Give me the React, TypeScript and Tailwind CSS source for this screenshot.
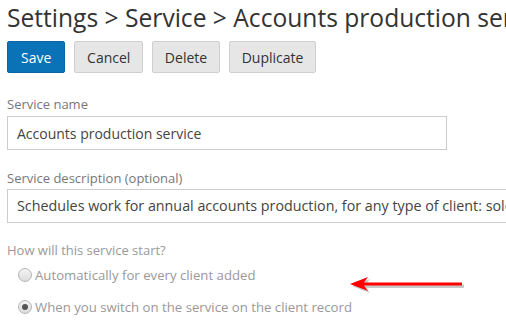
import React from "react";

// Service settings form — header, action buttons, name/description fields and start options.

const font = { fontFamily: '"Open Sans", "Liberation Sans", sans-serif' };

function ActionButton({ label, primary = false }: { label: string; primary?: boolean }) {
  return (
    <button
      className={
        primary
          ? "h-8 px-[13px] rounded-[2px] bg-[#0a72b7] border border-[#0866a5] text-white text-[14px]"
          : "h-8 px-[11.75px] rounded-[2px] bg-[#e6e6e6] border border-[#cfcfcf] text-[#333] text-[14px]"
      }
    >
      {label}
    </button>
  );
}

function Radio({ checked = false }: { checked?: boolean }) {
  return (
    <span className="w-[14px] h-[14px] rounded-full border border-[#b5b5b5] bg-gradient-to-b from-[#f4f4f4] to-[#dcdcdc] flex items-center justify-center shrink-0">
      {checked && <span className="w-[6px] h-[6px] rounded-full bg-[#555]" />}
    </span>
  );
}

function Arrow() {
  return (
    <svg width="120" height="22" viewBox="0 0 120 22" className="absolute left-[348px] top-[274px]">
      <g transform="translate(2,2)" fill="#9a9a9a" opacity="0.55">
        <polygon points="2,10 20,3 16,8.5 114,8.5 114,12 16,12 20,17" />
      </g>
      <polygon points="2,10 20,3 16,8.5 114,8.5 114,11.5 16,11.5 20,17" fill="#ff0000" />
    </svg>
  );
}

export default function App() {
  return (
    <div className="relative w-[506px] h-[334px] overflow-hidden bg-white" style={font}>
      <div className="pl-[7px] pt-[2px] flex flex-col">
        <h1 className="text-[24.6px] leading-[32px] text-[#333] whitespace-nowrap">
          Settings &gt; Service &gt; Accounts production service
        </h1>

        <div className="flex gap-[9px] mt-[7px]">
          <ActionButton label="Save" primary />
          <ActionButton label="Cancel" />
          <ActionButton label="Delete" />
          <ActionButton label="Duplicate" />
        </div>

        <label className="mt-[22px] text-[13px] leading-[18px] text-[#777]">Service name</label>
        <div className="mt-[3px] w-[440px] h-[34px] border border-[#cccccc] flex items-center px-[9px] text-[14px] text-[#444]">
          Accounts production service
        </div>

        <label className="mt-[19px] text-[13px] leading-[18px] text-[#777]">Service description (optional)</label>
        <div className="mt-[2px] w-[520px] h-[34px] border border-[#cccccc] flex items-center px-[9px] text-[14.3px] text-[#444] whitespace-nowrap overflow-hidden">
          Schedules work for annual accounts production, for any type of client: sole traders
        </div>

        <div className="mt-[18px] text-[13px] leading-[18px] text-[#999]">How will this service start?</div>
        <div className="mt-[6px] ml-[11px] flex items-center gap-[3px] text-[13.2px] leading-[20px] text-[#999]">
          <Radio />
          <span>Automatically for every client added</span>
        </div>
        <div className="mt-[12px] ml-[11px] flex items-center gap-[3px] text-[13.2px] leading-[20px] text-[#999]">
          <Radio checked />
          <span>When you switch on the service on the client record</span>
        </div>
      </div>
      <Arrow />
    </div>
  );
}
